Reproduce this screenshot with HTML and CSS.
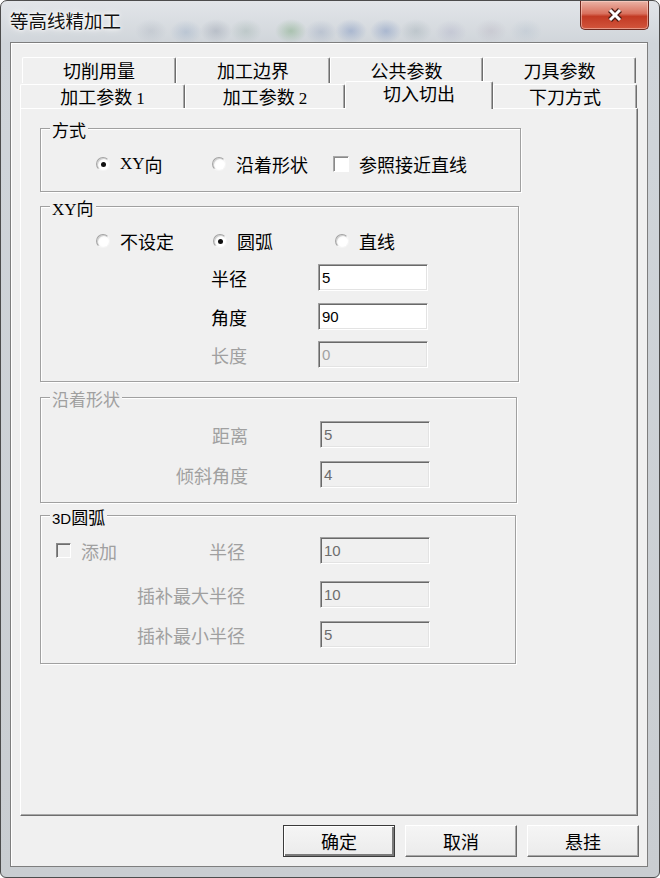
FILE: index.html
```html
<!DOCTYPE html>
<html lang="zh-CN">
<head>
  <meta charset="UTF-8">
  <title>等高线精加工</title>
  <link rel="stylesheet" href="styles.css">
</head>
<body>
  <div class="window">
    <div class="titlebar">
      <span class="title">等高线精加工</span>
      <div class="close">
        <svg width="18" height="16" viewBox="0 0 18 16">
          <path d="M4 3 L14 13 M14 3 L4 13" stroke="#4a1a12" stroke-width="5.5" fill="none"/>
          <path d="M4 3 L14 13 M14 3 L4 13" stroke="#fff" stroke-width="3" fill="none"/>
        </svg>
      </div>
    </div>

    <div class="client">
      <!-- tab headers, back row first -->
      <div class="tabrow back">
        <div class="tab t1">切削用量</div>
        <div class="tab t2">加工边界</div>
        <div class="tab t3">公共参数</div>
        <div class="tab t4">刀具参数</div>
      </div>
      <div class="tabrow front">
        <div class="tab t5">加工参数 <span class="lat">1</span></div>
        <div class="tab t6">加工参数 <span class="lat">2</span></div>
        <div class="tab t7 active">切入切出</div>
        <div class="tab t8">下刀方式</div>
      </div>

      <div class="panel">
        <!-- 方式 -->
        <div class="group g-mode">
          <span class="legend">方式</span>
          <div class="optrow">
            <div class="opt o1"><span class="radio on"></span><span class="lat">XY</span>向</div>
            <div class="opt o2"><span class="radio"></span>沿着形状</div>
            <div class="opt"><span class="check"></span>参照接近直线</div>
          </div>
        </div>

        <!-- XY向 -->
        <div class="group g-xy">
          <span class="legend"><span class="lat">XY</span>向</span>
          <div class="optrow">
            <div class="opt o3"><span class="radio"></span>不设定</div>
            <div class="opt o4"><span class="radio on"></span>圆弧</div>
            <div class="opt"><span class="radio"></span>直线</div>
          </div>
          <div class="field f1">
            <span class="lbl">半径</span>
            <span class="edit">5</span>
          </div>
          <div class="field f2">
            <span class="lbl">角度</span>
            <span class="edit">90</span>
          </div>
          <div class="field f3 off">
            <span class="lbl">长度</span>
            <span class="edit">0</span>
          </div>
        </div>

        <!-- 沿着形状 -->
        <div class="group g-shape off">
          <span class="legend">沿着形状</span>
          <div class="field">
            <span class="lbl">距离</span>
            <span class="edit">5</span>
          </div>
          <div class="field f4">
            <span class="lbl">倾斜角度</span>
            <span class="edit">4</span>
          </div>
        </div>

        <!-- 3D圆弧 -->
        <div class="group g-arc">
          <span class="legend"><span class="num">3D</span>圆弧</span>
          <div class="field off">
            <span class="lbl split">
              <span class="add"><span class="check"></span>添加</span>
              <span>半径</span>
            </span>
            <span class="edit">10</span>
          </div>
          <div class="field f5 off">
            <span class="lbl">插补最大半径</span>
            <span class="edit">10</span>
          </div>
          <div class="field f6 off">
            <span class="lbl">插补最小半径</span>
            <span class="edit">5</span>
          </div>
        </div>
      </div>

      <div class="buttons">
        <button class="btn default">确定</button>
        <button class="btn">取消</button>
        <button class="btn">悬挂</button>
      </div>
    </div>
  </div>
</body>
</html>
```

FILE: styles.css
```css
/* Basic Style */
* {
  box-sizing: border-box;
}
body {
  margin: 0;
  background: #fff;
  color: #000;
  font-family: "Noto Sans CJK SC", sans-serif;
  font-size: 18px;
}
.lat {
  font-family: "Liberation Serif", "Noto Sans CJK SC", serif;
  font-size: 17px;
}
.num {
  font-family: "Liberation Sans", sans-serif;
  font-size: 15px;
}

/* Window frame */
.window {
  width: 660px;
  height: 878px;
  border: 1px solid #4c4c4c;
  border-radius: 7px 7px 6px 6px;
  overflow: hidden;
  display: flex;
  flex-direction: column;
  background:
    radial-gradient(ellipse 16px 12px at 150px 30px, rgba(150, 160, 175, .25), transparent),
    radial-gradient(ellipse 16px 12px at 185px 31px, rgba(110, 140, 180, .25), transparent),
    radial-gradient(ellipse 16px 12px at 215px 30px, rgba(120, 130, 150, .3), transparent),
    radial-gradient(ellipse 16px 12px at 245px 30px, rgba(120, 150, 140, .25), transparent),
    radial-gradient(ellipse 16px 12px at 290px 30px, rgba(90, 150, 90, .35), transparent),
    radial-gradient(ellipse 16px 12px at 320px 31px, rgba(110, 130, 170, .25), transparent),
    radial-gradient(ellipse 16px 12px at 350px 30px, rgba(90, 120, 180, .35), transparent),
    radial-gradient(ellipse 16px 12px at 385px 30px, rgba(90, 120, 180, .35), transparent),
    radial-gradient(ellipse 16px 12px at 415px 30px, rgba(120, 140, 150, .25), transparent),
    radial-gradient(ellipse 16px 12px at 450px 31px, rgba(140, 140, 180, .22), transparent),
    radial-gradient(ellipse 16px 12px at 490px 30px, rgba(160, 150, 170, .22), transparent),
    radial-gradient(ellipse 16px 12px at 525px 30px, rgba(150, 170, 190, .22), transparent),
    linear-gradient(#e2e5e9, #d0d5da 42px, #c9cdd1);
}
.titlebar {
  height: 41px;
  flex: none;
  display: flex;
  justify-content: space-between;
  align-items: flex-start;
  padding-left: 9px;
}
.title {
  font-size: 18.5px;
  line-height: 38px;
  color: #111;
  text-shadow: 0 0 8px #fff, 0 0 4px #fff, 0 0 2px #fff;
}
.close {
  width: 69px;
  height: 29px;
  margin-right: 10px;
  border: 1px solid #6e2a20;
  border-top: none;
  border-radius: 0 0 5px 5px;
  background: linear-gradient(#eab3a6, #d9705d 45%, #c23a24 55%, #d2553c);
  box-shadow: inset 0 0 0 1px rgba(255, 220, 210, .5);
  display: flex;
  align-items: center;
  justify-content: center;
}

/* Client area */
.client {
  flex: 1;
  margin: 0 11px 10px 9px;
  border: 1px solid #7e7e7e;
  box-shadow: inset 1px 1px 0 #fff;
  background: #f0f0f0;
  padding: 14px 8px 0 9px;
  display: flex;
  flex-direction: column;
}

/* Tabs */
.tabrow {
  display: flex;
  align-items: flex-start;
}
.tabrow.back {
  height: 26px;
  margin-left: 2px;
}
.tabrow.front {
  height: 25px;
}
.tab {
  background: #f0f0f0;
  border-top: 1px solid #fff;
  border-left: 1px solid #fff;
  border-right: 1px solid #6e6e6e;
  box-shadow: inset -1px 0 0 #a8a8a8;
  border-radius: 2px 2px 0 0;
  text-align: center;
  font-size: 18px;
}
.back .tab {
  height: 26px;
  line-height: 25px;
}
.front .tab {
  height: 24px;
  margin-top: 1px;
  line-height: 23px;
}
.t1, .t2 { width: 154px; }
.t3, .t4 { width: 153px; }
.t5 { width: 165px; }
.t6 { width: 160px; }
.t7 { width: 148px; }
.t8 { width: 144px; }
.front .tab.active {
  position: relative;
  z-index: 1;
  height: 28px;
  margin-top: -2px;
  line-height: 22px;
}

/* Tab page */
.panel {
  width: 618px;
  height: 708px;
  border-top: 1px solid #fff;
  border-left: 1px solid #fff;
  border-right: 1px solid #6e6e6e;
  border-bottom: 1px solid #6e6e6e;
  box-shadow: inset -1px -1px 0 #a8a8a8;
  padding: 19px 0 0 19px;
}

/* Group boxes */
.group {
  position: relative;
  border: 1px solid #a0a0a0;
  box-shadow: inset 1px 1px 0 #fff, 1px 1px 0 #fff;
}
.legend {
  position: absolute;
  top: -9px;
  left: 9px;
  padding: 0 2px;
  background: #f0f0f0;
  font-size: 17px;
  line-height: 20px;
}
.g-mode {
  width: 481px;
  height: 64px;
  padding-top: 23px;
}
.g-xy {
  width: 479px;
  height: 176px;
  margin-top: 14px;
  padding-top: 22px;
}
.g-shape {
  width: 477px;
  height: 106px;
  margin-top: 15px;
  padding-top: 23px;
}
.g-arc {
  width: 476px;
  height: 149px;
  margin-top: 12px;
  padding-top: 21px;
}

/* Option rows */
.optrow {
  display: flex;
  align-items: center;
  height: 24px;
  padding-left: 55px;
  font-size: 18px;
}
.opt {
  display: flex;
  align-items: center;
}
.o1 { width: 116px; }
.o2 { width: 121px; }
.o3 { width: 117px; }
.o4 { width: 122px; }
.radio {
  position: relative;
  width: 14px;
  height: 14px;
  margin-right: 10px;
  border-radius: 50%;
  border: 1px solid;
  border-color: #a4a4a4 #f6f6f6 #f6f6f6 #a4a4a4;
  background: radial-gradient(circle at 60% 60%, #fff 40%, #ececec);
  box-shadow: inset 1px 1px 0 #d0d0d0;
}
.radio.on::after {
  content: "";
  position: absolute;
  left: 3.5px;
  top: 3.5px;
  width: 5px;
  height: 5px;
  border-radius: 50%;
  background: #111;
}
.check {
  width: 16px;
  height: 16px;
  margin-right: 10px;
  border: 1px solid;
  border-color: #a8a8a8 #fff #fff #a8a8a8;
  box-shadow: inset 1px 1px 0 #8a8a8a;
  background: #fff;
}

/* Labelled edit fields */
.field {
  display: flex;
  align-items: center;
  height: 27px;
  font-size: 18px;
}
.g-xy .field {
  padding-left: 170px;
}
.g-xy .lbl {
  width: 107px;
}
.g-xy .f1 { margin-top: 11px; }
.g-xy .f2 { margin-top: 12px; }
.g-xy .f3 { margin-top: 11px; }
.g-shape .lbl {
  width: 207px;
  margin-right: 72px;
  text-align: right;
}
.g-shape .f4 { margin-top: 13px; }
.g-arc .lbl {
  width: 204px;
  margin-right: 75px;
  text-align: right;
}
.g-arc .f5 { margin-top: 17px; }
.g-arc .f6 { margin-top: 13px; }
.lbl.split {
  display: flex;
  justify-content: space-between;
  align-items: center;
  padding-left: 15px;
}
.add {
  display: flex;
  align-items: center;
}
.add .check {
  width: 15px;
  height: 15px;
  margin-right: 10px;
  background: #f0f0f0;
  border-color: #8a8a8a #fff #fff #8a8a8a;
  box-shadow: inset 1px 1px 0 #6e6e6e;
}
.edit {
  width: 110px;
  height: 27px;
  padding-left: 3px;
  border: 1px solid;
  border-color: #a0a0a0 #fff #fff #a0a0a0;
  box-shadow: inset 1px 1px 0 #696969, inset -1px -1px 0 #e3e3e3;
  background: #fff;
  font-family: "Liberation Sans", sans-serif;
  font-size: 15px;
  line-height: 25px;
}

/* Disabled */
.off .lbl,
.off .add,
.off .legend {
  color: #a0a0a0;
}
.off .edit {
  background: #f0f0f0;
  color: #6d6d6d;
}
.f3 .edit {
  color: #a0a0a0;
}

/* Dialog buttons */
.buttons {
  display: flex;
  justify-content: flex-end;
  gap: 10px;
  margin-top: 9px;
}
.btn {
  width: 112px;
  height: 32px;
  padding: 0;
  border: 1px solid;
  border-color: #fff #6a6a6a #6a6a6a #fff;
  box-shadow: inset -1px -1px 0 #a8a8a8;
  background: linear-gradient(#f5f5f5, #ebebeb);
  font-family: "Noto Sans CJK SC", sans-serif;
  font-size: 18px;
  line-height: 28px;
  color: #000;
}
.btn.default {
  border-color: #3a3a3a;
  box-shadow: inset 1px 1px 0 #fff, inset -2px -2px 0 #7a7a7a;
}
```
